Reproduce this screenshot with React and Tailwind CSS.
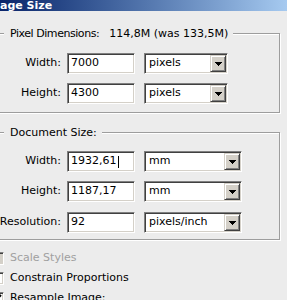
import React from "react";

const sunken =
  "border border-t-[#808080] border-l-[#808080] border-r-white border-b-white shadow-[inset_1px_1px_0_#404040,inset_-1px_-1px_0_#d4d0c8]";

function Arrow() {
  return (
    <svg width="7" height="4" shapeRendering="crispEdges">
      <rect x="0" y="0" width="7" height="1" fill="#000" />
      <rect x="1" y="1" width="5" height="1" fill="#000" />
      <rect x="2" y="2" width="3" height="1" fill="#000" />
      <rect x="3" y="3" width="1" height="1" fill="#000" />
    </svg>
  );
}

function TextBox({ value, caret }) {
  return (
    <div className={`ml-[6px] w-[68px] h-[21px] bg-white flex items-center pl-[3px] ${sunken}`}>
      <span>{value}</span>
      {caret && <span className="inline-block w-px h-[12px] bg-black ml-[1px]" />}
    </div>
  );
}

function Dropdown({ value, wide }) {
  return (
    <div
      className={`ml-[9px] h-[21px] bg-white flex items-center ${wide ? "w-[98px]" : "w-[84px]"} ${sunken}`}
    >
      <span className="flex-1 pl-[4px]">{value}</span>
      <div className="mr-[1px] w-[16px] h-[17px] bg-[#d4d0c8] border border-t-[#d4d0c8] border-l-[#d4d0c8] border-r-[#404040] border-b-[#404040] shadow-[inset_1px_1px_0_#fff,inset_-1px_-1px_0_#808080] flex items-center justify-center">
        <Arrow />
      </div>
    </div>
  );
}

function Row({ label, value, unit, caret, wide, className = "" }) {
  return (
    <div className={`flex items-center h-[21px] ${className}`}>
      <div className="w-[68px] text-right whitespace-nowrap">{label}</div>
      <TextBox value={value} caret={caret} />
      <Dropdown value={unit} wide={wide} />
    </div>
  );
}

function Group({ title, children, className = "" }) {
  return (
    <div
      className={`-ml-[8px] w-[288px] border border-[#9d9d9d] shadow-[inset_1px_1px_0_#fff,1px_1px_0_#fff] ${className}`}
    >
      <div className="-mt-[7px] h-[13px] flex items-center">
        <div className="ml-[11px] pl-[6px] pr-[5px] bg-[#ececec] flex items-center leading-[13px] whitespace-nowrap">
          {title}
        </div>
      </div>
      {children}
    </div>
  );
}

function Check({ label, state, disabled }) {
  return (
    <div className="-ml-[9px] flex items-center gap-[6px] h-[13px]">
      <div
        className={`w-[13px] h-[13px] ${disabled ? "bg-[#d4d0c8]" : "bg-white"} ${sunken}`}
      >
        {state && (
          <svg width="11" height="11" className="block">
            <path d="M2 5 L4 7 L9 2" stroke="#000" strokeWidth="2" fill="none" />
          </svg>
        )}
      </div>
      <span className={`whitespace-nowrap ${disabled ? "text-[#a0a0a0]" : ""}`}>{label}</span>
    </div>
  );
}

export default function App() {
  return (
    <div className="w-[287px] h-[300px] overflow-hidden bg-[#ececec] font-['DejaVu_Sans',sans-serif] text-[11px] text-black">
      <div className="h-[11px] bg-linear-to-r from-[#0a246a] to-[#a6caf0] text-white font-bold text-[11px] leading-[11px] whitespace-nowrap">
        age Size
      </div>

      <Group
        className="mt-[22px] h-[80px]"
        title={
          <>
            <span className="tracking-[-0.45px]">Pixel Dimensions:</span>
            <span className="ml-[10px]">114,8M (was 133,5M)</span>
          </>
        }
      >
        <Row className="mt-[13px]" label="Width:" value="7000" unit="pixels" />
        <Row className="mt-[9px]" label="Height:" value="4300" unit="pixels" />
      </Group>

      <Group className="mt-[19px] h-[108px]" title="Document Size:">
        <Row className="mt-[12px]" label="Width:" value="1932,61" unit="mm" caret wide />
        <Row className="mt-[9px]" label="Height:" value="1187,17" unit="mm" wide />
        <Row className="mt-[10px]" label="Resolution:" value="92" unit="pixels/inch" wide />
      </Group>

      <div className="mt-[12px] flex flex-col gap-[7px]">
        <Check label="Scale Styles" disabled />
        <Check label="Constrain Proportions" />
        <Check label="Resample Image:" state />
      </div>
    </div>
  );
}
